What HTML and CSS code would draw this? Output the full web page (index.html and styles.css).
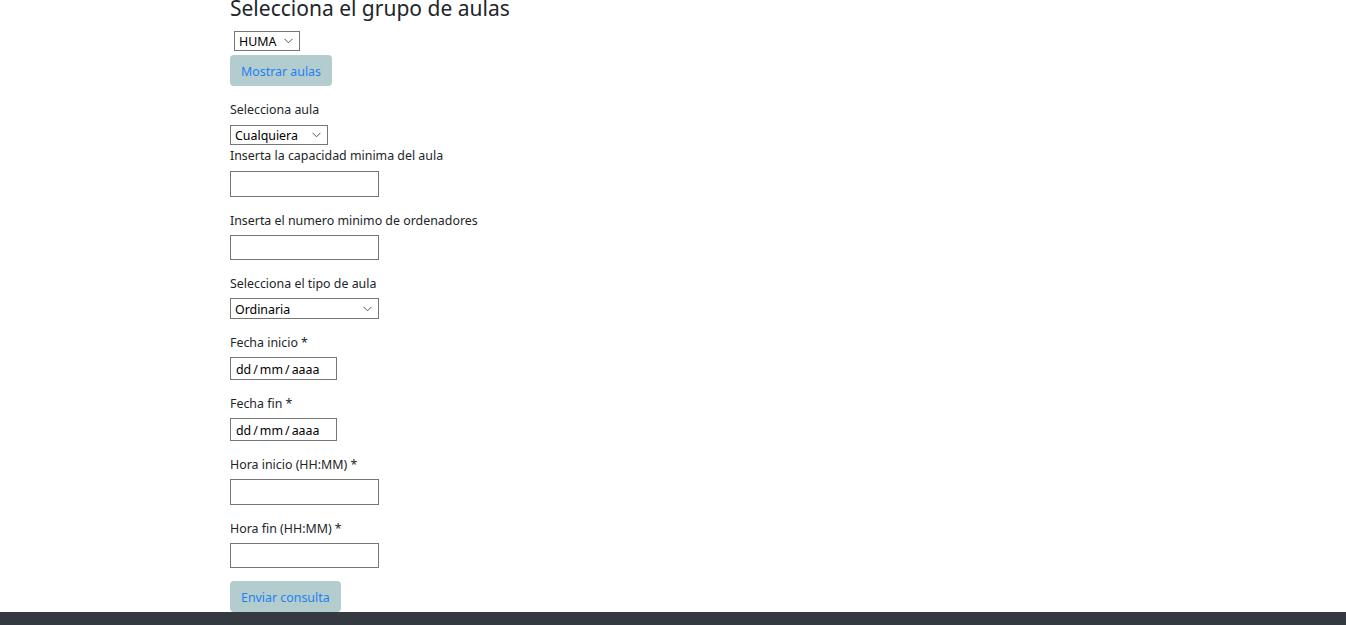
FILE: index.html
```html
<!DOCTYPE html>
<html lang="es">
<head>
<meta charset="utf-8">
<title>Consulta de aulas</title>
<link rel="stylesheet" href="styles.css">
</head>
<body>
<main class="page">
  <h2 class="title">Selecciona el grupo de aulas</h2>
  <div class="select-wrap sel-grupo">
    <select class="sel"><option>HUMA</option></select>
    <svg class="chev" width="9" height="6" viewBox="0 0 9 6"><path d="M0.5 0.8 L4.5 4.8 L8.5 0.8" fill="none" stroke="#555" stroke-width="1"/></svg>
  </div>
  <button class="btn btn-top" type="button">Mostrar aulas</button>

  <label class="lbl lbl-first">Selecciona aula</label>
  <div class="select-wrap sel-aula">
    <select class="sel"><option>Cualquiera</option></select>
    <svg class="chev" width="9" height="6" viewBox="0 0 9 6"><path d="M0.5 0.8 L4.5 4.8 L8.5 0.8" fill="none" stroke="#555" stroke-width="1"/></svg>
  </div>

  <div class="group group-cap">
    <label class="lbl">Inserta la capacidad minima del aula</label>
    <input class="field" type="text">
  </div>
  <div class="group">
    <label class="lbl">Inserta el numero minimo de ordenadores</label>
    <input class="field" type="text">
  </div>
  <div class="group">
    <label class="lbl">Selecciona el tipo de aula</label>
    <div class="select-wrap sel-tipo">
      <select class="sel"><option>Ordinaria</option></select>
      <svg class="chev" width="9" height="6" viewBox="0 0 9 6"><path d="M0.5 0.8 L4.5 4.8 L8.5 0.8" fill="none" stroke="#555" stroke-width="1"/></svg>
    </div>
  </div>
  <div class="group">
    <label class="lbl">Fecha inicio *</label>
    <div class="date-field"><span>dd</span><span class="sep">/</span><span>mm</span><span class="sep">/</span><span>aaaa</span></div>
  </div>
  <div class="group">
    <label class="lbl">Fecha fin *</label>
    <div class="date-field"><span>dd</span><span class="sep">/</span><span>mm</span><span class="sep">/</span><span>aaaa</span></div>
  </div>
  <div class="group">
    <label class="lbl">Hora inicio (HH:MM) *</label>
    <input class="field" type="text">
  </div>
  <div class="group group-last">
    <label class="lbl">Hora fin (HH:MM) *</label>
    <input class="field" type="text">
  </div>
  <button class="btn btn-send" type="button">Enviar consulta</button>
</main>
<footer class="footer"></footer>
</body>
</html>
```
FILE: styles.css
```css
html, body {
  margin: 0;
  padding: 0;
  background: #fff;
}
body {
  font-family: "Noto Sans", "Open Sans", sans-serif;
  font-size: 12.4px;
  color: #212529;
  overflow: hidden;
  height: 625px;
  display: flex;
  flex-direction: column;
}
.page {
  padding-left: 230px;
  display: flex;
  flex-direction: column;
  align-items: flex-start;
  flex: 1;
  min-height: 0;
  overflow: hidden;
}
.title {
  margin: -4px 0 0 0;
  font-size: 21px;
  font-weight: 400;
  line-height: 25px;
  color: #212529;
}
.select-wrap {
  position: relative;
  box-sizing: border-box;
  border: 1px solid #767676;
  background: #fff;
  display: flex;
  flex: none;
}
.sel {
  appearance: none;
  -webkit-appearance: none;
  box-sizing: border-box;
  border: 0;
  outline: 0;
  background: transparent;
  font-family: inherit;
  font-size: 12.4px;
  color: #000;
  padding: 2px 0 0 4px;
  margin: 0;
  width: 100%;
  height: 100%;
  line-height: 16px;
}
.chev {
  position: absolute;
  right: 6px;
  top: 50%;
  margin-top: -3px;
}
.sel-grupo {
  margin: 10px 0 0 4px;
  width: 66px;
  height: 20px;
}
.sel-aula {
  width: 98px;
  height: 20px;
}
.sel-tipo {
  width: 149px;
  height: 21px;
}
.btn {
  font-family: inherit;
  font-size: 12.4px;
  color: #1f7ff2;
  background: #b3cdcf;
  border: 0;
  border-radius: 4px;
  padding: 2px 11px 0;
  height: 31px;
  line-height: 29px;
  cursor: pointer;
  flex: none;
}
.btn-top {
  margin-top: 4px;
}
.lbl {
  display: block;
  padding-top: 1px;
  line-height: 17px;
  margin-bottom: 6px;
}
.lbl-first {
  margin-top: 14px;
  margin-bottom: 7px;
}
.group {
  display: flex;
  flex-direction: column;
  align-items: flex-start;
  margin-top: 14px;
  flex: none;
}
.group-cap {
  margin-top: 1px;
}
.group-cap .lbl {
  margin-bottom: 7px;
}
.field {
  box-sizing: border-box;
  width: 149px;
  height: 25.5px;
  border: 1px solid #767676;
  padding: 0 4px;
  margin: 0;
  font-family: inherit;
  font-size: 12.4px;
  outline: 0;
}
.date-field {
  box-sizing: border-box;
  width: 107px;
  height: 23px;
  border: 1px solid #767676;
  padding: 2px 5px 0;
  display: flex;
  align-items: center;
  font-size: 12.4px;
  color: #000;
}
.sep {
  padding: 0 2px;
}
.btn-send {
  margin-top: 13px;
}
.footer {
  height: 13px;
  background: #343a40;
  flex: none;
}
```
